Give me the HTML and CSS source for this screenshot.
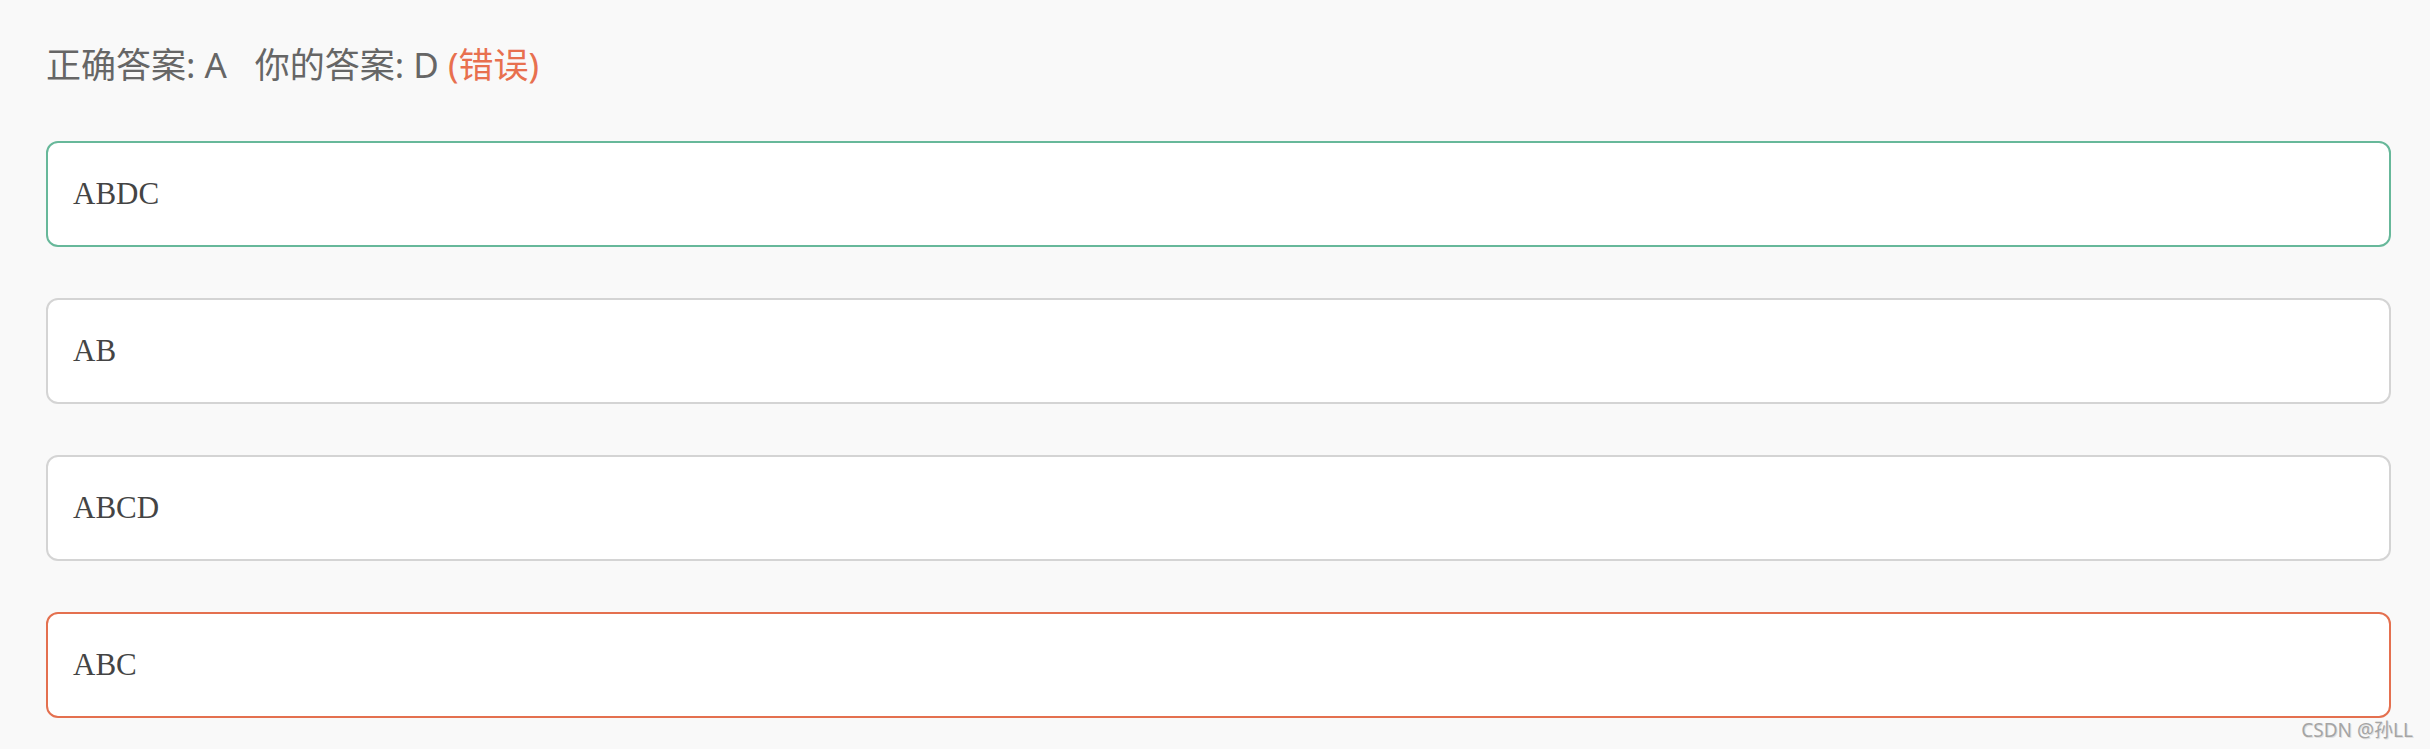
FILE: index.html
```html
<!DOCTYPE html>
<html lang="zh">
<head>
<meta charset="utf-8">
<title>答案</title>
<link rel="stylesheet" href="styles.css">
</head>
<body>
<div class="page">
  <div class="result">
    <span class="label">正确答案: A</span>
    <span class="label mine">你的答案: D <span class="wrong">(错误)</span></span>
  </div>
  <div class="options">
    <div class="option correct">ABDC</div>
    <div class="option">AB</div>
    <div class="option">ABCD</div>
    <div class="option chosen">ABC</div>
  </div>
  <div class="watermark">CSDN @孙LL</div>
</div>
</body>
</html>
```

FILE: styles.css
```css
html, body {
  margin: 0;
  padding: 0;
  background: #f9f9f9;
}
.page {
  position: relative;
  height: 749px;
  box-sizing: border-box;
  padding: 45px 39px 0 46px;
  font-family: "Noto Sans", "Noto Sans CJK SC", sans-serif;
}
.result {
  display: flex;
  font-family: "Noto Sans", "Noto Sans CJK SC", sans-serif;
  font-size: 35px;
  line-height: 44px;
  height: 44px;
  color: #666;
  margin-top: -2px;
  margin-bottom: 54px;
}
.mine {
  margin-left: 28px;
}
.wrong {
  color: #e8704f;
}
.options {
  display: flex;
  flex-direction: column;
  gap: 51px;
}
.option {
  box-sizing: border-box;
  height: 106px;
  background: #fff;
  border: 2px solid #d4d4d4;
  border-radius: 12px;
  display: flex;
  align-items: center;
  padding-left: 25px;
  font-family: "Liberation Serif", "Times New Roman", serif;
  font-size: 31px;
  color: #444;
}
.option.correct {
  border-color: #67b89a;
}
.option.chosen {
  border-color: #e4704f;
}
.watermark {
  position: absolute;
  right: 17px;
  bottom: 8px;
  font-size: 19px;
  line-height: 22px;
  color: #a5a5a5;
  text-shadow: 1px 1px 0 #e0e0e0;
  font-family: "Noto Sans", "Noto Sans CJK SC", sans-serif;
}
```
